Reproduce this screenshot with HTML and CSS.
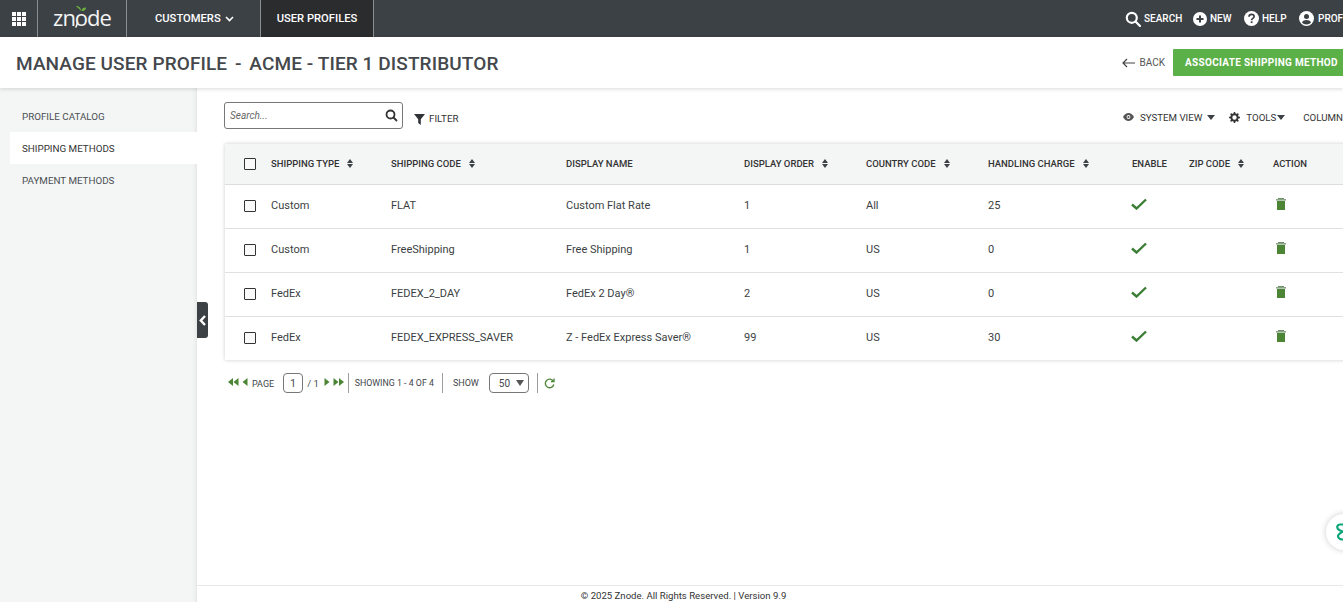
FILE: index.html
```html
<!DOCTYPE html>
<html lang="en">
<head>
<meta charset="utf-8">
<title>Manage User Profile</title>
<link rel="stylesheet" href="styles.css">
</head>
<body>
<div class="page">
  <header class="topbar">
    <div class="apps">
      <svg width="14" height="14" viewBox="0 0 14 14" fill="#fff"><rect width="4" height="4"/><rect x="5" width="4" height="4"/><rect x="10" width="4" height="4"/><rect y="5" width="4" height="4"/><rect x="5" y="5" width="4" height="4"/><rect x="10" y="5" width="4" height="4"/><rect y="10" width="4" height="4"/><rect x="5" y="10" width="4" height="4"/><rect x="10" y="10" width="4" height="4"/></svg>
    </div>
    <div class="logo">
      <span class="logo-text">znode</span>
      <svg class="leaf" width="14" height="24" viewBox="0 0 14 24" fill="none"><path d="M8 6C6 3 4 2.500 3 1c3 0 5 1.500 5 5zM8.500 6c0-2 1.500-3.500 4.500-3.500C13 5 11 6.500 8.500 6z" fill="#6cb33f"/><path d="M4.500 17c-.5 2-.8 3.500-1.500 5" stroke="#f2f2f2" stroke-width="1.600" stroke-linecap="round"/></svg>
    </div>
    <nav class="nav">
      <a class="nav-item nav-customers">CUSTOMERS
        <svg width="9" height="6" viewBox="0 0 9 6" fill="none" stroke="#fff" stroke-width="1.6"><path d="M1 1l3.5 3.5L8 1"/></svg>
      </a>
      <a class="nav-item nav-active">USER PROFILES</a>
    </nav>
    <div class="tools">
      <a class="tool tool-search">
        <svg width="16" height="16" viewBox="0 0 16 16" fill="none" stroke="#fff" stroke-width="2.2"><circle cx="6.8" cy="6.8" r="5"/><path d="M10.5 10.5L15 15" stroke-linecap="round"/></svg>SEARCH</a>
      <a class="tool tool-new">
        <svg width="14" height="14" viewBox="0 0 14 14"><circle cx="7" cy="7" r="7" fill="#fff"/><path d="M7 3.5v7M3.5 7h7" stroke="#3c4146" stroke-width="2"/></svg>NEW</a>
      <a class="tool tool-help">
        <svg width="15" height="15" viewBox="0 0 15 15"><circle cx="7.5" cy="7.5" r="7.5" fill="#fff"/><path d="M5 5.8c0-1.5 1.1-2.4 2.6-2.4s2.5.9 2.5 2.1c0 1.9-2.5 1.8-2.5 3.7" fill="none" stroke="#3c4146" stroke-width="1.7"/><rect x="6.7" y="10.3" width="1.8" height="1.8" fill="#3c4146"/></svg>HELP</a>
      <a class="tool tool-profile">
        <svg width="15" height="15" viewBox="0 0 15 15"><circle cx="7.5" cy="7.5" r="7.5" fill="#fff"/><circle cx="7.5" cy="5.6" r="2.5" fill="#3c4146"/><path d="M3 11.5c.8-1.8 2.5-2.5 4.5-2.5s3.700.7 4.500 2.500c-1 1.300-2.600 2-4.500 2s-3.500-.7-4.500-2z" fill="#3c4146"/></svg>PROFILE</a>
    </div>
  </header>

  <section class="titlebar">
    <h1 class="title">MANAGE USER PROFILE <span class="dash">-</span> ACME - TIER 1 DISTRIBUTOR</h1>
    <div class="title-actions">
      <a class="back">
        <svg width="13" height="10" viewBox="0 0 13 10" fill="none" stroke="#444" stroke-width="1.2"><path d="M13 5H1M5 1L1 5l4 4"/></svg>BACK</a>
      <a class="primary">ASSOCIATE SHIPPING METHOD</a>
    </div>
  </section>

  <div class="body">
    <aside class="sidebar">
      <a class="side-item">PROFILE CATALOG</a>
      <a class="side-item side-active">SHIPPING METHODS</a>
      <a class="side-item">PAYMENT METHODS</a>
      <span class="collapse">
        <svg width="7" height="11" viewBox="0 0 7 11" fill="none" stroke="#fff" stroke-width="2.400"><path d="M6 1L1.800 5.500 6 10"/></svg>
      </span>
    </aside>

    <main class="main">
      <div class="toolbar">
        <div class="search">
          <span class="search-hint">Search...</span>
          <svg width="13" height="13" viewBox="0 0 13 13" fill="none" stroke="#333" stroke-width="1.800"><circle cx="5.500" cy="5.500" r="4"/><path d="M8.500 8.500L12 12"/></svg>
        </div>
        <a class="filter">
          <svg width="11" height="11" viewBox="0 0 11 11" fill="#2f3338"><path d="M0 0h11L6.800 5.200V11L4.200 9V5.200z"/></svg>FILTER</a>
        <div class="views">
          <a class="view view-system">
            <svg width="11" height="8" viewBox="0 0 11 8"><path d="M0 4c1.500-2.600 3.400-4 5.500-4S9.500 1.400 11 4C9.500 6.600 7.600 8 5.500 8S1.500 6.600 0 4z" fill="#555"/><circle cx="5.500" cy="4" r="1.900" fill="#fff"/><circle cx="5.500" cy="4" r="1.100" fill="#555"/></svg>
            SYSTEM VIEW <i class="caret"></i></a>
          <a class="view view-tools">
            <svg width="11" height="11" viewBox="0 0 11 11"><circle cx="5.500" cy="5.500" r="3.200" fill="none" stroke="#333" stroke-width="2"/><path d="M5.500 0v2M5.500 9v2M0 5.500h2M9 5.500h2M1.600 1.600L3 3M8 8l1.400 1.400M1.600 9.400L3 8M8 3l1.400-1.400" stroke="#333" stroke-width="1.500"/></svg>
            TOOLS<i class="caret"></i></a>
          <a class="view">COLUMNS</a>
        </div>
      </div>

      <div class="grid-card">
        <table class="grid">
          <colgroup>
            <col class="c-check"><col class="c-type"><col class="c-code"><col class="c-name"><col class="c-order"><col class="c-country"><col class="c-charge"><col class="c-enable"><col class="c-zip"><col class="c-action">
          </colgroup>
          <thead>
            <tr>
              <th class="cell-check"><span class="box"></span></th>
              <th>SHIPPING TYPE<i class="sort"></i></th>
              <th>SHIPPING CODE<i class="sort"></i></th>
              <th>DISPLAY NAME</th>
              <th>DISPLAY ORDER<i class="sort"></i></th>
              <th>COUNTRY CODE<i class="sort"></i></th>
              <th>HANDLING CHARGE<i class="sort"></i></th>
              <th>ENABLE</th>
              <th>ZIP CODE<i class="sort"></i></th>
              <th>ACTION</th>
            </tr>
          </thead>
          <tbody>
            <tr>
              <td class="cell-check"><span class="box"></span></td><td>Custom</td><td>FLAT</td><td>Custom Flat Rate</td><td>1</td><td>All</td><td>25</td>
              <td><svg class="check" width="16" height="12" viewBox="0 0 16 12" fill="none" stroke="#3a7d34" stroke-width="2.400"><path d="M1 6.500l4.500 4L15 1.500"/></svg></td><td></td>
              <td><svg class="trash" width="10" height="12" viewBox="0 0 10 12"><path d="M0 1.200h10v1.300H0z" fill="#6f8f6a"/><path d="M1 3h8v9H1z" fill="#4b8535"/><path d="M2 0h6v1H2z" fill="#6f8f6a"/></svg></td>
            </tr>
            <tr>
              <td class="cell-check"><span class="box"></span></td><td>Custom</td><td>FreeShipping</td><td>Free Shipping</td><td>1</td><td>US</td><td>0</td>
              <td><svg class="check" width="16" height="12" viewBox="0 0 16 12" fill="none" stroke="#3a7d34" stroke-width="2.400"><path d="M1 6.500l4.500 4L15 1.500"/></svg></td><td></td>
              <td><svg class="trash" width="10" height="12" viewBox="0 0 10 12"><path d="M0 1.200h10v1.300H0z" fill="#6f8f6a"/><path d="M1 3h8v9H1z" fill="#4b8535"/><path d="M2 0h6v1H2z" fill="#6f8f6a"/></svg></td>
            </tr>
            <tr>
              <td class="cell-check"><span class="box"></span></td><td>FedEx</td><td>FEDEX_2_DAY</td><td>FedEx 2 Day®</td><td>2</td><td>US</td><td>0</td>
              <td><svg class="check" width="16" height="12" viewBox="0 0 16 12" fill="none" stroke="#3a7d34" stroke-width="2.400"><path d="M1 6.500l4.500 4L15 1.500"/></svg></td><td></td>
              <td><svg class="trash" width="10" height="12" viewBox="0 0 10 12"><path d="M0 1.200h10v1.300H0z" fill="#6f8f6a"/><path d="M1 3h8v9H1z" fill="#4b8535"/><path d="M2 0h6v1H2z" fill="#6f8f6a"/></svg></td>
            </tr>
            <tr>
              <td class="cell-check"><span class="box"></span></td><td>FedEx</td><td>FEDEX_EXPRESS_SAVER</td><td>Z - FedEx Express Saver®</td><td>99</td><td>US</td><td>30</td>
              <td><svg class="check" width="16" height="12" viewBox="0 0 16 12" fill="none" stroke="#3a7d34" stroke-width="2.400"><path d="M1 6.500l4.500 4L15 1.500"/></svg></td><td></td>
              <td><svg class="trash" width="10" height="12" viewBox="0 0 10 12"><path d="M0 1.200h10v1.300H0z" fill="#6f8f6a"/><path d="M1 3h8v9H1z" fill="#4b8535"/><path d="M2 0h6v1H2z" fill="#6f8f6a"/></svg></td>
            </tr>
          </tbody>
        </table>
      </div>

      <div class="pager">
        <svg class="pg-first" width="11" height="8" viewBox="0 0 11 8" fill="#4b8535"><path d="M5 0v8L0 4zM10.500 0v8l-5-4z"/></svg>
        <svg class="pg-prev" width="6" height="8" viewBox="0 0 6 8" fill="#4b8535"><path d="M5.500 0v8L.5 4z"/></svg>
        <span class="pg-label">PAGE</span>
        <span class="pg-input">1</span>
        <span class="pg-of">/ 1</span>
        <svg class="pg-next" width="6" height="8" viewBox="0 0 6 8" fill="#4b8535"><path d="M.5 0v8l5-4z"/></svg>
        <svg class="pg-last" width="11" height="8" viewBox="0 0 11 8" fill="#4b8535"><path d="M.5 0v8l5-4zM6 0v8l5-4z"/></svg>
        <span class="pg-sep"></span>
        <span class="pg-showing">SHOWING 1 - 4 OF 4</span>
        <span class="pg-sep"></span>
        <span class="pg-show">SHOW</span>
        <span class="pg-select">50<i class="pg-caret"></i></span>
        <span class="pg-sep"></span>
        <svg class="pg-refresh" width="11" height="11" viewBox="0 0 11 11" fill="none" stroke="#4b8535" stroke-width="1.300"><path d="M9.300 3.200A4.300 4.300 0 1 0 9.800 6.500"/><path d="M10 0.500v3H7" /></svg>
      </div>

      <footer class="footer">© 2025 Znode. All Rights Reserved. | Version 9.9</footer>
      <span class="chat">
        <svg width="14" height="18" viewBox="0 0 14 18" fill="none" stroke="#0aa678" stroke-width="2.200"><path d="M11 1.500H5C2.500 1.500 1.500 4 3 6c2 2.500 9 3 9 7 0 2-1.500 3.500-4 3.500S3 15 3 13c0-3 6-4 8-7"/></svg>
      </span>
    </main>
  </div>
</div>
</body>
</html>
```
FILE: styles.css
```css
* { box-sizing: border-box; }
html, body { margin: 0; padding: 0; height: 100%; overflow: hidden; }
body { font-family: Roboto, "Liberation Sans", sans-serif; color: #333; background: #fff; }
a { color: inherit; text-decoration: none; }

.page { width: 1343px; height: 602px; display: flex; flex-direction: column; overflow: hidden; }

.topbar { height: 37px; flex: none; background: #3c4146; color: #fff; display: flex; align-items: stretch; }
.apps { width: 38px; display: flex; align-items: center; justify-content: center; border-right: 1px solid #8a8e91; }
.logo { position: relative; width: 89px; border-right: 1px solid #8a8e91; display: flex; align-items: center; justify-content: center; }
.logo-text { font-family: "Open Sans", sans-serif; font-size: 22px; letter-spacing: -1px; line-height: 1; margin-top: -3px; color: #f4f4f4; font-weight: 400; }
.leaf { position: absolute; left: 35px; top: 5px; }
.nav { display: flex; }
.nav-item { font-size: 11.2px; font-weight: 500; display: flex; align-items: center; gap: 4px; }
.nav-customers { width: 134px; padding-left: 28px; border-right: 1px solid #8a8e91; }
.nav-active { width: 113px; justify-content: center; background: #2b2c2e; border-right: 1px solid #8a8e91; }
.tools { position: absolute; left: 1125px; top: 0; height: 37px; display: flex; align-items: center; white-space: nowrap; }
.tool { display: flex; align-items: center; font-size: 10px; font-weight: 500; }
.tool-search { gap: 3px; width: 68px; }
.tool-new { gap: 3px; width: 51px; }
.tool-help { gap: 3px; width: 55px; }
.tool-profile { gap: 4px; }

.titlebar { height: 51px; flex: none; display: flex; align-items: center; justify-content: space-between; padding-left: 16px; box-shadow: 0 1px 4px rgba(0,0,0,.15); position: relative; z-index: 2; background: #fff; }
.title { margin: 1px 0 0; font-size: 19px; font-weight: 500; color: #44484c; letter-spacing: .1px; white-space: nowrap; }
.dash { margin: 0 3px; }
.title-actions { display: flex; align-items: center; }
.back { display: flex; align-items: center; gap: 5px; font-size: 10px; color: #555; margin-right: 8px; }
.primary { background: #5cb048; color: #fff; font-size: 10px; font-weight: 700; letter-spacing: .3px; height: 27px; width: 170px; padding-left: 12px; display: flex; align-items: center; border-radius: 1px 0 0 1px; white-space: nowrap; }

.body { flex: 1; display: flex; min-height: 0; }
.sidebar { position: relative; width: 197px; flex: none; background: #f4f6f6; padding: 12px 0 0 10px; display: flex; flex-direction: column; box-shadow: inset -5px 0 5px -5px rgba(0,0,0,.12); }
.side-item { height: 32px; padding-left: 12px; font-size: 9.8px; color: #4a4e52; display: flex; align-items: center; }
.side-active { background: #fff; color: #333; }
.collapse { position: absolute; left: 197px; top: 214px; width: 11px; height: 36px; background: #3c4146; border-radius: 0 3px 3px 0; display: flex; align-items: center; justify-content: center; z-index: 3; }

.main { position: relative; flex: 1; min-width: 0; overflow: hidden; display: flex; flex-direction: column; }
.toolbar { height: 56px; flex: none; padding: 14px 0 0 27px; display: flex; align-items: flex-start; }
.search { width: 179px; height: 27px; border: 1px solid #777; border-radius: 3px; padding: 0 4px 0 5px; display: flex; align-items: center; justify-content: space-between; }
.search-hint { font-size: 10px; font-style: italic; color: #666; }
.filter { display: flex; align-items: center; gap: 4px; font-size: 9.8px; margin: 9px 0 0 11px; color: #333; line-height: 16px; }
.views { position: absolute; left: 926px; top: 16px; display: flex; align-items: center; height: 26px; white-space: nowrap; }
.view { display: flex; align-items: center; gap: 6px; font-size: 9.7px; color: #333; }
.view-system { margin-right: 14px; }
.view-system .caret { margin-left: -1px; }
.view-tools { margin-right: 18px; }
.view-tools .caret { margin-left: -5px; }
.caret { display: inline-block; border-left: 4px solid transparent; border-right: 4px solid transparent; border-top: 5px solid #3c4146; }

.grid-card { margin-left: 28px; flex: none; width: 1200px; box-shadow: 0 0 4px rgba(0,0,0,.2); background: #fff; }
.grid { width: 1200px; table-layout: fixed; border-collapse: collapse; font-size: 11px; }
.c-check { width: 46px; } .c-type { width: 120px; } .c-code { width: 175px; } .c-name { width: 178px; }
.c-order { width: 122px; } .c-country { width: 122px; } .c-charge { width: 144px; } .c-enable { width: 57px; }
.c-zip { width: 84px; } .c-action { width: 152px; }
.grid th { height: 40px; background: #f4f6f6; border-bottom: 1px solid #dcdddd; font-size: 9.5px; font-weight: 500; text-align: left; padding: 0 0 1px; color: #333; white-space: nowrap; }
.grid td { height: 44px; border-bottom: 1px solid #dfe0e0; padding: 0 0 1px; color: #3b3f43; font-size: 11px; }
.grid tbody tr:last-child td { border-bottom: 0; }
.cell-check { padding-left: 19px !important; padding-bottom: 0 !important; }
.box { display: block; width: 12px; height: 12px; border: 1px solid #333; border-radius: 1px; background: #fafafa; }
.sort { display: inline-block; position: relative; width: 7px; height: 9px; margin-left: 8px; vertical-align: -1px; }
.sort::before, .sort::after { content: ""; position: absolute; left: 0; border-left: 3.5px solid transparent; border-right: 3.5px solid transparent; }
.sort::before { top: 0; border-bottom: 4px solid #3c4146; }
.sort::after { bottom: 0; border-top: 4px solid #3c4146; }
.check { display: block; margin: -3px 0 0 -1px; }
.trash { display: block; margin: -3px 0 0 3px; }

.pager { height: 22px; flex: none; margin: 12px 0 0 31px; display: flex; align-items: center; font-size: 9px; color: #41464b; }
.pg-first { margin-top: -2px; }
.pg-prev { margin: -2px 0 0 3px; }
.pg-label { margin: 1px 0 0 4px; }
.pg-input { width: 20px; height: 20px; margin-left: 9px; border: 1px solid #777; border-radius: 4px; display: flex; align-items: center; justify-content: center; font-size: 10px; }
.pg-of { margin-left: 4px; font-size: 9.5px; }
.pg-next { margin: -2px 0 0 5px; }
.pg-last { margin: -2px 0 0 3px; }
.pg-sep { width: 1px; height: 20px; background: #9a9ea1; margin-left: 4px; }
.pg-showing { margin-left: 6px; font-size: 8.8px; }
.pg-showing + .pg-sep { margin-left: 8px; }
.pg-show { margin-left: 10px; }
.pg-select { position: relative; width: 40px; height: 20px; margin-left: 10px; border: 1px solid #777; border-radius: 4px; display: flex; align-items: center; padding-left: 9px; font-size: 10px; }
.pg-caret { position: absolute; right: 4px; top: 6px; border-left: 4px solid transparent; border-right: 4px solid transparent; border-top: 6px solid #555; }
.pg-select + .pg-sep { margin-left: 8px; }
.pg-refresh { margin-left: 6px; }

.footer { position: absolute; left: 0; right: 0; top: 497px; height: 17px; padding: 2px 173px 0 0; border-top: 1px solid #e8e8e8; display: flex; align-items: center; justify-content: center; font-size: 9.6px; color: #333; background: #fff; }
.chat { position: absolute; left: 1129px; top: 426px; width: 36px; height: 36px; border-radius: 50%; background: #fff; box-shadow: 0 0 6px rgba(0,0,0,.2); padding: 9px 0 0 9px; }
.chat svg { display: block; }
```
